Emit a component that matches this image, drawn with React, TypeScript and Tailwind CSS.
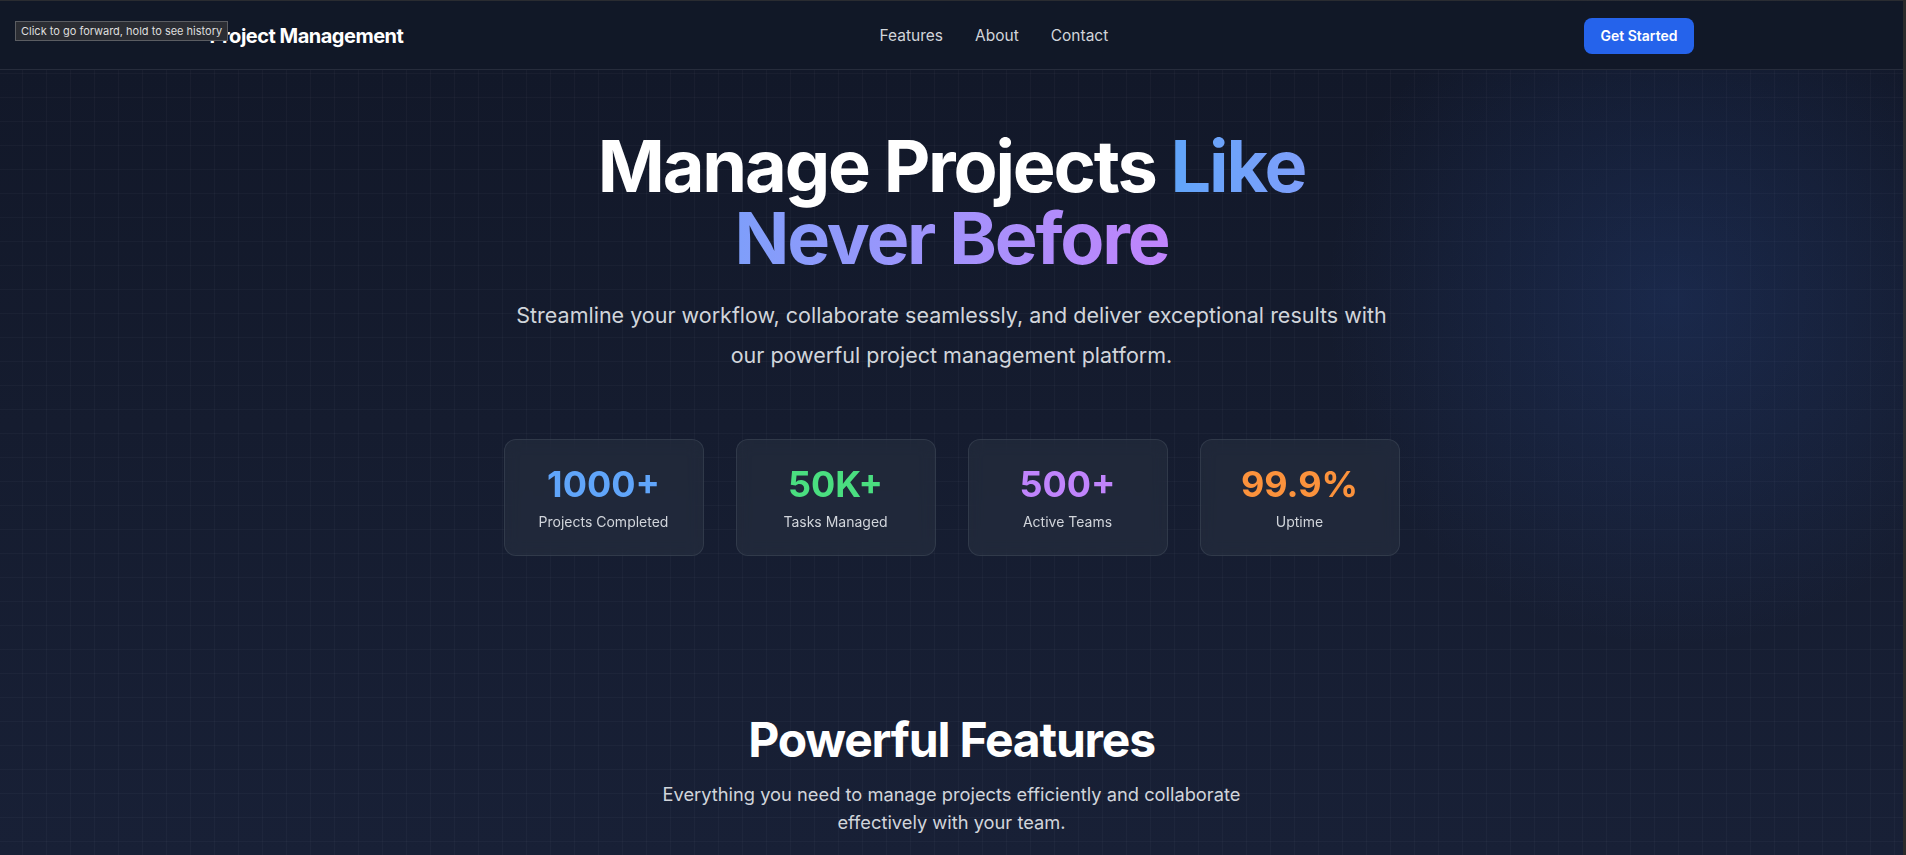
import React from "react";

const stats = [
  { value: "1000+", label: "Projects Completed", color: "text-[#60a5fa]" },
  { value: "50K+", label: "Tasks Managed", color: "text-[#4ade80]" },
  { value: "500+", label: "Active Teams", color: "text-[#c084fc]" },
  { value: "99.9%", label: "Uptime", color: "text-[#fb923c]" },
];

export default function App() {
  return (
    <div
      className="relative flex h-[855px] w-full overflow-hidden bg-[#111827]"
      style={{ fontFamily: "Inter, 'Noto Sans', 'Liberation Sans', sans-serif" }}
    >
      <div className="relative flex min-w-0 flex-1 flex-col">
        <div className="h-px w-full bg-[#2a2c31]" />
        {/* Header */}
        <header className="relative z-10 h-[69px] border-b border-[#262c3b] bg-[#111827]">
          <div className="mx-auto flex h-full max-w-[1484px] items-center justify-between pt-px">
            <div className="text-xl font-bold tracking-tight text-white">Project Management</div>
            <nav className="flex items-center gap-8 text-[15.5px] text-[#d1d5db]">
              <a>Features</a>
              <a>About</a>
              <a>Contact</a>
            </nav>
            <button className="rounded-lg bg-[#2563eb] px-4 py-2 text-sm font-semibold text-white">
              Get Started
            </button>
          </div>
        </header>

        {/* Main */}
        <main className="relative flex-1 bg-[linear-gradient(180deg,#121829_0%,#151c2f_45%,#182036_100%)]">
          <div className="pointer-events-none absolute inset-0 bg-[linear-gradient(rgba(255,255,255,0.028)_1px,transparent_1px),linear-gradient(90deg,rgba(255,255,255,0.028)_1px,transparent_1px)] bg-[size:24px_24px] bg-[position:-2px_3px]" />
          <div className="pointer-events-none absolute -top-[120px] right-[-120px] h-[700px] w-[700px] rounded-full bg-[radial-gradient(circle,rgba(45,85,170,0.24)_0%,rgba(45,85,170,0.09)_45%,transparent_70%)]" />

          <section className="relative px-4 pb-20 pt-[60px] text-center">
            <h1 className="mx-auto max-w-4xl text-7xl font-bold leading-none tracking-[-0.03em] text-white">
              Manage Projects{" "}
              <span className="bg-gradient-to-r from-[#60a5fa] to-[#c084fc] bg-clip-text text-transparent">
                Like Never Before
              </span>
            </h1>
            <p className="mx-auto mt-[21px] max-w-4xl text-[21.5px] leading-[40px] text-[#d1d5db]">
              Streamline your workflow, collaborate seamlessly, and deliver exceptional results with
              our powerful project management platform.
            </p>

            <div className="mx-auto mt-[64px] grid max-w-4xl grid-cols-4 gap-8">
              {stats.map((s) => (
                <div
                  key={s.label}
                  className="rounded-xl border border-[#4b5563]/40 bg-[#374151]/30 px-6 pb-[23px] pt-6 backdrop-blur-sm"
                >
                  <div className={`text-4xl font-bold ${s.color}`}>{s.value}</div>
                  <div className="mt-2 text-sm text-[#d1d5db]">{s.label}</div>
                </div>
              ))}
            </div>
          </section>

          <section className="relative px-4 pt-20 text-center">
            <h2 className="text-5xl font-bold tracking-tight text-white">Powerful Features</h2>
            <p className="mx-auto mt-4 max-w-[610px] text-[18.3px] leading-7 text-[#d1d5db]">
              Everything you need to manage projects efficiently and collaborate effectively with
              your team.
            </p>
          </section>
        </main>

        {/* Browser tooltip overlay */}
        <div className="absolute left-[15px] top-[21px] z-20 border border-[#5b5d62] bg-[#2b2d33] px-[5px] py-[2px] text-[11px] leading-[14px] text-[#dedede]">
          Click to go forward, hold to see history
        </div>
      </div>
      {/* scrollbar strip */}
      <div className="h-full w-[3px] shrink-0 bg-[#2b2b2b]" />
    </div>
  );
}
